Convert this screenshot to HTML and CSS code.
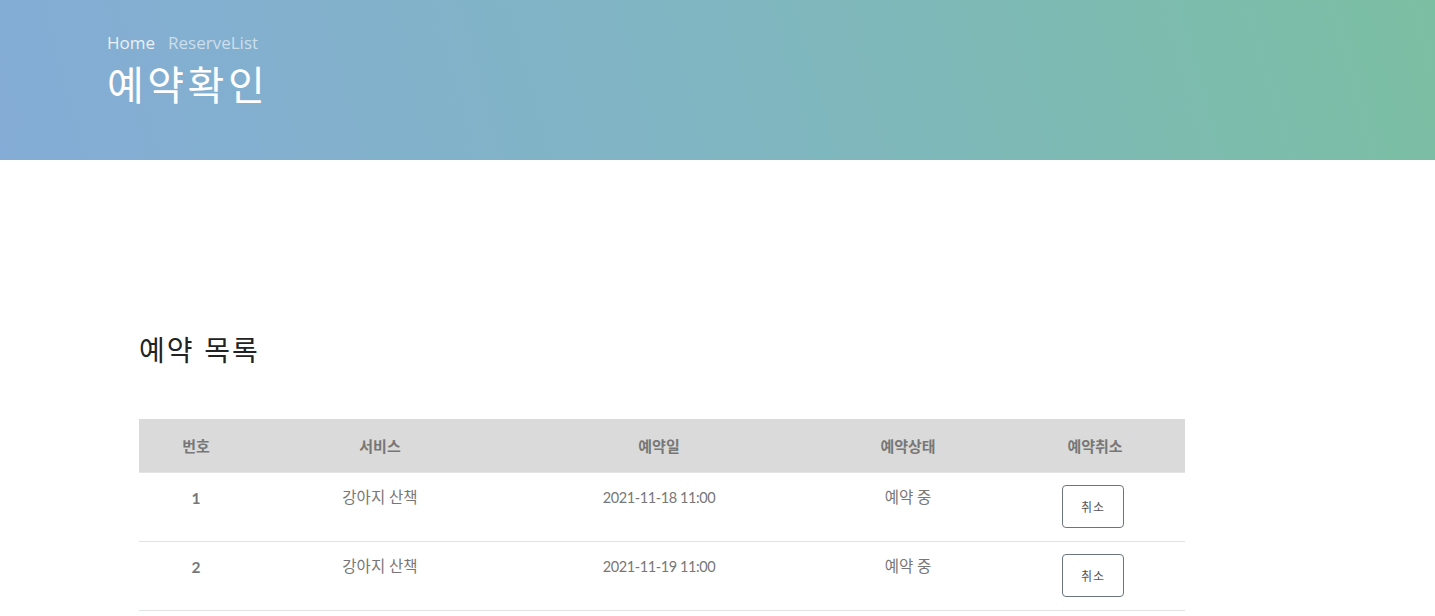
FILE: index.html
```html
<!DOCTYPE html>
<html lang="ko">
<head>
<meta charset="utf-8">
<title>예약확인</title>
<link rel="stylesheet" href="styles.css">
</head>
<body>
<header class="hero">
  <div class="hero-inner">
    <nav class="crumbs"><span class="crumb-home">Home</span><span class="crumb-cur">ReserveList</span></nav>
    <h1 class="hero-title">예약확인</h1>
  </div>
</header>
<main class="content">
  <h2 class="section-title">예약 목록</h2>
  <table class="rtable">
    <colgroup>
      <col class="c1"><col class="c2"><col class="c3"><col class="c4"><col class="c5">
    </colgroup>
    <thead>
      <tr><th>번호</th><th>서비스</th><th>예약일</th><th>예약상태</th><th>예약취소</th></tr>
    </thead>
    <tbody>
      <tr>
        <td class="num">1</td><td>강아지 산책</td><td class="date">2021-11-18 11:00</td><td>예약 중</td>
        <td class="act"><button class="btn-cancel" type="button">취소</button></td>
      </tr>
      <tr>
        <td class="num">2</td><td>강아지 산책</td><td class="date">2021-11-19 11:00</td><td>예약 중</td>
        <td class="act"><button class="btn-cancel" type="button">취소</button></td>
      </tr>
    </tbody>
  </table>
</main>
</body>
</html>
```

FILE: styles.css
```css
* { box-sizing: border-box; }
html, body { margin: 0; padding: 0; background: #fff; }
body {
  font-family: "Open Sans", "Noto Sans CJK KR", sans-serif;
  color: #777;
}
.hero {
  height: 160px;
  background: linear-gradient(75deg, #84acd6 0%, #80b6c2 50%, #7bbfa3 100%);
}
.hero-inner {
  padding: 31px 0 0 107px;
}
.crumbs {
  font-size: 17px;
  line-height: 23px;
  display: flex;
  gap: 13px;
}
.crumb-home { color: rgba(255,255,255,0.85); }
.crumb-cur { color: rgba(255,255,255,0.6); }
.hero-title {
  margin: 4px 0 0 0;
  font-family: "Noto Sans CJK KR", sans-serif;
  font-weight: 400;
  font-size: 40px;
  line-height: 50px;
  color: #fff;
  letter-spacing: 3.5px;
}
.content {
  padding: 0 0 0 139px;
}
.section-title {
  margin: 0;
  padding-top: 169px;
  font-family: "Noto Sans CJK KR", sans-serif;
  font-weight: 400;
  font-size: 28px;
  line-height: 40px;
  color: #222;
  letter-spacing: 2px;
}
.rtable {
  margin-top: 50px;
  width: 1046px;
  border-collapse: collapse;
  table-layout: fixed;
  font-size: 15px;
}
.c1 { width: 114px; }
.c2 { width: 254px; }
.c3 { width: 304px; }
.c4 { width: 194px; }
.c5 { width: 180px; }
.rtable thead th {
  background: #dadada;
  height: 53px;
  font-family: "Noto Sans CJK KR", sans-serif;
  font-weight: 700;
  font-size: 15px;
  color: #777;
  text-align: center;
  vertical-align: middle;
  border-bottom: 1px solid #e4e4e4;
  padding: 0;
}
.rtable tbody td {
  height: 69px;
  text-align: center;
  vertical-align: top;
  padding: 14px 0 0 0;
  border-bottom: 1px solid #dee2e6;
  font-family: "Lato", "Noto Sans CJK KR", sans-serif;
  font-size: 15.5px;
  color: #777;
  line-height: 20px;
}
.rtable tbody td.date {
  font-size: 14.5px;
  letter-spacing: -0.4px;
  padding-top: 15px;
}
.rtable tbody td.num { font-weight: 700; padding-top: 15px; }
.rtable tbody td.act { padding: 12px 4px 0 0; }
.btn-cancel {
  width: 62px;
  height: 43px;
  background: #fff;
  border: 1px solid #6c757d;
  border-radius: 4px;
  font-family: "Noto Sans CJK KR", sans-serif;
  font-size: 12px;
  color: #555;
  letter-spacing: 1px;
  padding: 0;
}
```
